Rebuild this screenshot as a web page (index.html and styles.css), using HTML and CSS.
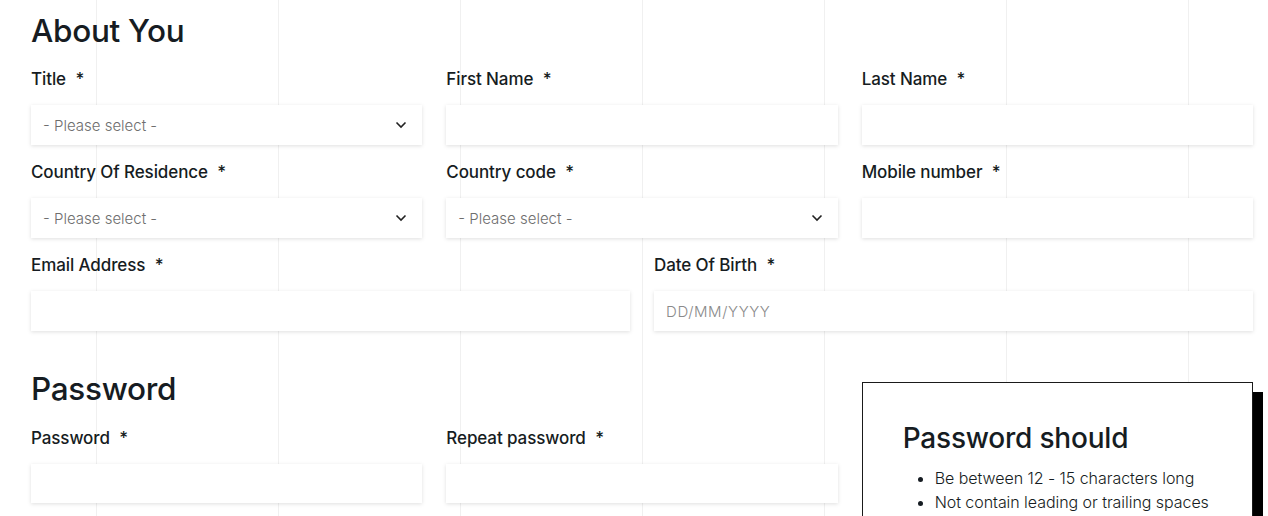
FILE: index.html
```html
<!DOCTYPE html>
<html lang="en">
<head>
<meta charset="utf-8">
<title>About You</title>
<link rel="stylesheet" href="styles.css">
</head>
<body>
<main class="page">
  <section class="section">
    <h2 class="heading">About You</h2>
    <div class="row row-3">
      <div class="field">
        <label class="label">Title <span class="req">*</span></label>
        <div class="control select"><span class="placeholder">- Please select -</span><svg class="chev" viewBox="0 0 12 8" width="12" height="8"><path d="M1.5 1.5 L6 6 L10.5 1.5" fill="none" stroke="#222" stroke-width="1.6"/></svg></div>
      </div>
      <div class="field">
        <label class="label">First Name <span class="req">*</span></label>
        <div class="control"></div>
      </div>
      <div class="field">
        <label class="label">Last Name <span class="req">*</span></label>
        <div class="control"></div>
      </div>
    </div>
    <div class="row row-3">
      <div class="field">
        <label class="label">Country Of Residence <span class="req">*</span></label>
        <div class="control select"><span class="placeholder">- Please select -</span><svg class="chev" viewBox="0 0 12 8" width="12" height="8"><path d="M1.5 1.5 L6 6 L10.5 1.5" fill="none" stroke="#222" stroke-width="1.6"/></svg></div>
      </div>
      <div class="field">
        <label class="label">Country code <span class="req">*</span></label>
        <div class="control select"><span class="placeholder">- Please select -</span><svg class="chev" viewBox="0 0 12 8" width="12" height="8"><path d="M1.5 1.5 L6 6 L10.5 1.5" fill="none" stroke="#222" stroke-width="1.6"/></svg></div>
      </div>
      <div class="field">
        <label class="label">Mobile number <span class="req">*</span></label>
        <div class="control"></div>
      </div>
    </div>
    <div class="row row-2">
      <div class="field">
        <label class="label">Email Address <span class="req">*</span></label>
        <div class="control"></div>
      </div>
      <div class="field">
        <label class="label">Date Of Birth <span class="req">*</span></label>
        <div class="control"><span class="placeholder date">DD/MM/YYYY</span></div>
      </div>
    </div>
  </section>

  <section class="section pw">
    <h2 class="heading pw-heading">Password</h2>
    <div class="field pw-1">
      <label class="label">Password <span class="req">*</span></label>
      <div class="control"></div>
    </div>
    <div class="field pw-2">
      <label class="label">Repeat password <span class="req">*</span></label>
      <div class="control"></div>
    </div>
    <aside class="rules">
      <h3 class="rules-title">Password should</h3>
      <ul class="rules-list">
        <li>Be between 12 - 15 characters long</li>
        <li>Not contain leading or trailing spaces</li>
      </ul>
    </aside>
  </section>
</main>
</body>
</html>
```
FILE: styles.css
```css
html, body {
  margin: 0;
  padding: 0;
}
body {
  background-color: #fff;
  background-image: repeating-linear-gradient(to right, transparent 0 96px, #f0f0f0 96px 97px, transparent 97px 182px);
  font-family: "Inter", "Noto Sans", sans-serif;
  color: #161c22;
  height: 516px;
  overflow: hidden;
}
.page {
  padding: 12px 15px 0 31px;
}
.heading {
  margin: 0;
  font-size: 31.5px;
  font-weight: 500;
  line-height: 38px;
  letter-spacing: -0.3px;
}
.row {
  display: grid;
  column-gap: 24px;
}
.row-3 { grid-template-columns: 1fr 1fr 1fr; }
.row-2 { grid-template-columns: 1fr 1fr; }
.field {
  display: flex;
  flex-direction: column;
}
.label {
  font-size: 17px;
  font-weight: 500;
  line-height: 20px;
  padding-top: 19px;
  padding-bottom: 16px;
  letter-spacing: -0.1px;
}
.req { margin-left: 5px; }
.control {
  height: 40px;
  background: #fff;
  box-shadow: 0 1px 4px rgba(0,0,0,0.13);
  display: flex;
  align-items: center;
  padding: 0 12px;
  box-sizing: border-box;
}
.select { justify-content: space-between; padding-right: 15px; }
.placeholder {
  font-size: 15px;
  font-weight: 300;
  color: #6e6e6e;
}
.placeholder.date { letter-spacing: 0.6px; color: #8a8a8a; }
.chev { display: block; }

.row + .row .label { padding-top: 17px; }

.pw {
  margin-top: 39px;
  display: grid;
  grid-template-columns: 1fr 1fr 1fr;
  column-gap: 24px;
  grid-template-rows: 38px 95px;
}
.pw-heading { grid-column: 1 / 3; grid-row: 1; }
.pw-1 { grid-column: 1; grid-row: 2; }
.pw-2 { grid-column: 2; grid-row: 2; }
.pw .label { padding-top: 20px; }
.rules {
  grid-column: 3;
  grid-row: 1 / 3;
  align-self: start;
  margin-top: 12px;
  border: 1px solid #1a1a1a;
  box-shadow: 10px 10px 0 #000;
  background: #fff;
  padding: 38px 20px 20px 40px;
  height: 200px;
}
.rules-title {
  margin: 0;
  font-size: 28px;
  font-weight: 500;
  line-height: 34px;
  letter-spacing: -0.2px;
}
.rules-list {
  margin: 11px 0 0;
  padding-left: 32px;
  font-size: 16px;
  font-weight: 300;
  line-height: 24px;
  letter-spacing: -0.05px;
}
```
